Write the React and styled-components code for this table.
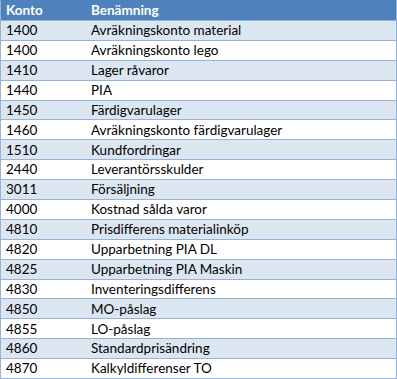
import styled, { createGlobalStyle } from "styled-components";

const GlobalStyle = createGlobalStyle`
  body {
    margin: 0;
    background: #ffffff;
    font-family: "Lato", "Liberation Sans", sans-serif;
  }
`;

const accounts = [
  ["1400", "Avräkningskonto material"],
  ["1400", "Avräkningskonto lego"],
  ["1410", "Lager råvaror"],
  ["1440", "PIA"],
  ["1450", "Färdigvarulager"],
  ["1460", "Avräkningskonto färdigvarulager"],
  ["1510", "Kundfordringar"],
  ["2440", "Leverantörsskulder"],
  ["3011", "Försäljning"],
  ["4000", "Kostnad sålda varor"],
  ["4810", "Prisdifferens materialinköp"],
  ["4820", "Upparbetning PIA DL"],
  ["4825", "Upparbetning PIA Maskin"],
  ["4830", "Inventeringsdifferens"],
  ["4850", "MO-påslag"],
  ["4855", "LO-påslag"],
  ["4860", "Standardprisändring"],
  ["4870", "Kalkyldifferenser TO"],
];

const Table = styled.div`
  display: grid;
  grid-template-rows: 20px repeat(18, 1fr);
  width: 397px;
  height: 379px;
  box-sizing: border-box;
  border: 1px solid #95b3d7;
  border-top: none;
  font-size: 13.5px;
`;

const Row = styled.div`
  display: grid;
  grid-template-columns: 85px 1fr;
  align-items: center;
  background: ${(p) => (p.$shaded ? "#dce6f1" : "#ffffff")};
  border-top: 1px solid #95b3d7;
  color: #000000;
`;

const HeaderRow = styled(Row)`
  background: #4f81bd;
  border-top: none;
  color: #ffffff;
  font-weight: 700;
`;

const Cell = styled.div`
  padding: ${(p) => (p.$head ? "2px" : "1px")} 0 0 5px;
  white-space: nowrap;
  line-height: 1;
`;

export default function App() {
  return (
    <>
      <GlobalStyle />
      <Table>
        <HeaderRow>
          <Cell $head>Konto</Cell>
          <Cell $head>Benämning</Cell>
        </HeaderRow>
        {accounts.map(([konto, name], i) => (
          <Row key={i} $shaded={i % 2 === 0}>
            <Cell>{konto}</Cell>
            <Cell>{name}</Cell>
          </Row>
        ))}
      </Table>
    </>
  );
}
